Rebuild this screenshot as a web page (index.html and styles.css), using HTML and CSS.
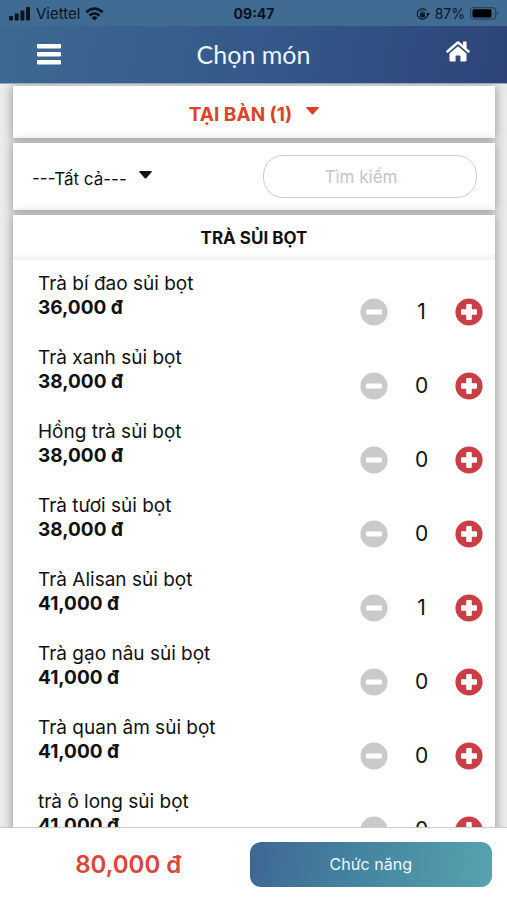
FILE: index.html
```html
<!DOCTYPE html>
<html lang="vi">
<head>
<meta charset="utf-8">
<meta name="viewport" content="width=device-width, initial-scale=1">
<title>Chọn món</title>
<link rel="stylesheet" href="styles.css">
</head>
<body>
<svg class="defs" aria-hidden="true">
  <symbol id="minus" viewBox="0 0 28 28"><circle cx="14" cy="14" r="13.6" fill="#cacaca"/><rect x="6" y="11.5" width="16" height="5" rx="1" fill="#fff"/></symbol>
  <symbol id="plus" viewBox="0 0 28 28"><circle cx="14" cy="14" r="13.6" fill="#c93f45"/><path d="M11.2 7q0-1 1-1h3.600q1 0 1 1v4.200h4.200q1 0 1 1v3.600q0 1-1 1h-4.200v4.200q0 1-1 1h-3.600q-1 0-1-1v-4.200h-4.200q-1 0-1-1v-3.600q0-1 1-1h4.200z" fill="#fff"/></symbol>
  <symbol id="caret" viewBox="0 0 13 8"><path d="M.8 0h11.400q1 .3.300 1.200L7.200 7.200q-.7.700-1.400 0L.5 1.200Q-.2.300.8 0z" fill="currentColor"/></symbol>
</svg>
<div class="status">
  <div class="status-side carrier">
    <svg width="22" height="14" viewBox="0 0 22 14"><rect x="0" y="9" width="4" height="4.500" rx="1"/><rect x="5.700" y="6.500" width="4" height="7" rx="1"/><rect x="11.400" y="3.500" width="4" height="10" rx="1"/><rect x="17" y="0" width="4" height="13.500" rx="1"/></svg>
    <span>Viettel</span>
    <svg width="19" height="14" viewBox="0 0 19 14"><g fill="none" stroke="#0b141c" stroke-width="2.600"><path d="M1.300 5.300Q9.500-2 17.700 5.300"/><path d="M4.400 8.600q5.100-4.300 10.200 0"/></g><path d="M6.500 10.500q3-2.300 6 0l-3 3.200z"/></svg>
  </div>
  <strong>09:47</strong>
  <div class="status-side status-right">
    <svg width="14" height="14" viewBox="0 0 14 14"><circle cx="6.500" cy="7" r="5.200" fill="none" stroke="#0b141c" stroke-width="1.200" stroke-dasharray="28 3"/><rect x="4" y="6.300" width="5" height="4" rx=".6"/><path d="M5 6.500V5.300q1.500-2.200 3 0v1.200" fill="none" stroke="#0b141c"/><path d="M10 6h4l-2 3z"/></svg>
    <span>87%</span>
    <svg width="29" height="13" viewBox="0 0 29 13"><rect x=".6" y=".6" width="25" height="11.600" rx="3" fill="none" stroke="#28475f" stroke-width="1.200"/><rect x="2.500" y="2.300" width="19" height="8.200" rx="1.500" fill="#000"/><path d="M27 4.200q2.600 2.200 0 4.400z" fill="#28475f"/></svg>
  </div>
</div>
<header class="nav">
  <button class="icon-button" aria-label="Menu"><svg width="24" height="21" viewBox="0 0 24 21" fill="#fff"><rect y="0" width="24" height="4.600" rx="1"/><rect y="8" width="24" height="4.600" rx="1"/><rect y="16" width="24" height="4.600" rx="1"/></svg></button>
  <h1>Chọn món</h1>
  <a class="icon-button home" href="#" aria-label="Trang chủ"><svg width="24" height="21" viewBox="0 0 24 21" fill="#fff"><path d="M12 .3q.7 0 1.300.5L17 4V1.200q0-.6.600-.6h2.400q.6 0 .6.600v6l3 2.600q.5.500.1.900l-.8 1q-.4.400-.9 0L12.600 3.600q-.6-.5-1.200 0L2 11.700q-.5.400-.9 0l-.8-1q-.4-.4.100-.9L10.700.8q.6-.5 1.300-.5z"/><path d="M12 5.300l8.500 7.200v7q0 1.100-1.100 1.100h-5v-5.300q0-.8-.8-.8h-3.200q-.8 0-.8.800v5.300h-5q-1.100 0-1.100-1.100v-7z"/></svg></a>
</header>
<main>
  <section class="card place">
    <button class="place-button">TẠI BÀN (1)<svg class="caret" aria-hidden="true"><use href="#caret"/></svg></button>
  </section>
  <section class="card filter">
    <label class="picker"><select aria-label="Nhóm món"><option>---Tất cả---</option></select><svg class="caret" aria-hidden="true"><use href="#caret"/></svg></label>
    <input class="search" type="text" placeholder="Tìm kiếm" aria-label="Tìm kiếm">
  </section>
  <section class="card menu">
    <h2>TRÀ SỦI BỌT</h2>
    <ul>
      <li><div><p>Trà bí đao sủi bọt</p><b>36,000 đ</b></div><div class="stepper"><button aria-label="Bớt"><svg><use href="#minus"/></svg></button><span>1</span><button aria-label="Thêm"><svg><use href="#plus"/></svg></button></div></li>
      <li><div><p>Trà xanh sủi bọt</p><b>38,000 đ</b></div><div class="stepper"><button aria-label="Bớt"><svg><use href="#minus"/></svg></button><span>0</span><button aria-label="Thêm"><svg><use href="#plus"/></svg></button></div></li>
      <li><div><p>Hồng trà sủi bọt</p><b>38,000 đ</b></div><div class="stepper"><button aria-label="Bớt"><svg><use href="#minus"/></svg></button><span>0</span><button aria-label="Thêm"><svg><use href="#plus"/></svg></button></div></li>
      <li><div><p>Trà tươi sủi bọt</p><b>38,000 đ</b></div><div class="stepper"><button aria-label="Bớt"><svg><use href="#minus"/></svg></button><span>0</span><button aria-label="Thêm"><svg><use href="#plus"/></svg></button></div></li>
      <li><div><p>Trà Alisan sủi bọt</p><b>41,000 đ</b></div><div class="stepper"><button aria-label="Bớt"><svg><use href="#minus"/></svg></button><span>1</span><button aria-label="Thêm"><svg><use href="#plus"/></svg></button></div></li>
      <li><div><p>Trà gạo nâu sủi bọt</p><b>41,000 đ</b></div><div class="stepper"><button aria-label="Bớt"><svg><use href="#minus"/></svg></button><span>0</span><button aria-label="Thêm"><svg><use href="#plus"/></svg></button></div></li>
      <li><div><p>Trà quan âm sủi bọt</p><b>41,000 đ</b></div><div class="stepper"><button aria-label="Bớt"><svg><use href="#minus"/></svg></button><span>0</span><button aria-label="Thêm"><svg><use href="#plus"/></svg></button></div></li>
      <li><div><p>trà ô long sủi bọt</p><b>41,000 đ</b></div><div class="stepper"><button aria-label="Bớt"><svg><use href="#minus"/></svg></button><span>0</span><button aria-label="Thêm"><svg><use href="#plus"/></svg></button></div></li>
    </ul>
  </section>
</main>
<footer>
  <strong class="total">80,000 đ</strong>
  <button class="action">Chức năng</button>
</footer>
</body>
</html>
```
FILE: styles.css
```css
* { box-sizing: border-box; }
body {
  margin: 0;
  height: 100vh;
  display: flex;
  flex-direction: column;
  overflow: hidden;
  font-family: Inter, "Noto Sans", sans-serif;
  color: #111;
  background: #fff;
}
button, input, select { font: inherit; color: inherit; }
button { border: 0; padding: 0; background: none; }
svg { display: block; }
h1, h2, p, ul { margin: 0; padding: 0; }
.defs { display: none; }

.status {
  display: flex;
  align-items: center;
  flex: none;
  height: 26px;
  padding: 1px 8px 0 9px;
  background: #406b93;
  color: #0b141c;
  fill: #0b141c;
  font-size: 14px;
}
.status-side { flex: 1; display: flex; align-items: center; gap: 5px; }
.carrier { font-size: 15px; }
.status-right { justify-content: flex-end; }

.nav {
  display: flex;
  align-items: center;
  justify-content: space-between;
  flex: none;
  height: 58px;
  padding: 0 37px;
  color: #eef5fb;
  background: linear-gradient(100deg, #3d6991, #34598a 50%, #2e4479);
  border-bottom: 1px solid #8fa6c0;
}
.nav h1 { padding-bottom: 2px; font: 400 25px/32px Lato, Inter, sans-serif; }
.home { padding-bottom: 6px; }

main {
  flex: 1;
  min-height: 0;
  overflow: hidden;
  padding: 2px 12px 0 13px;
  display: flex;
  flex-direction: column;
  gap: 5px;
  background: #ececec;
}
.card { flex: none; background: #fff; box-shadow: 0 1px 10px 1px #999; }
.caret { width: 13px; height: 8px; }

.place { height: 52px; display: flex; justify-content: center; }
.place-button {
  display: flex;
  align-items: center;
  gap: 14px;
  padding-top: 4px;
  font-size: 19px;
  font-weight: 700;
  color: #df4126;
}
.place-button .caret { margin-bottom: 6px; }

.filter {
  height: 67px;
  padding: 0 18px 0 19px;
  display: flex;
  align-items: center;
  justify-content: space-between;
}
.picker { display: flex; align-items: center; gap: 12px; font-size: 17px; }
.picker select { appearance: none; border: 0; padding: 4px 0 0; background: none; }
.picker .caret { margin-bottom: 4px; }
.search {
  width: 214px;
  height: 43px;
  padding: 0 18px 0 0;
  border: 1px solid #ccc;
  border-radius: 20px;
  background: #fff;
  text-align: center;
  font-size: 17px;
}
.search::placeholder { color: #c4c4c4; }

.menu h2 {
  height: 45px;
  font-size: 17px;
  font-weight: 700;
  line-height: 46px;
  text-align: center;
  background: linear-gradient(#fff 37px, #f0f0f0);
}
.menu ul { list-style: none; }
.menu li {
  display: flex;
  justify-content: space-between;
  height: 74px;
  padding: 12px 12px 0 25px;
  font-size: 19px;
  line-height: 24px;
}
.menu b { display: block; font-weight: 700; }
.stepper {
  display: grid;
  grid-template-columns: 28px 67px 28px;
  align-self: flex-start;
  align-items: center;
  padding-top: 26px;
  font-size: 21px;
  line-height: 28px;
  text-align: center;
}
.stepper svg { width: 28px; height: 28px; }

footer {
  flex: none;
  display: grid;
  grid-template-columns: 1fr 1fr;
  align-items: center;
  height: 73px;
  padding: 0 15px 0 7px;
  border-top: 1px solid #ccc;
}
.total { text-align: center; font-size: 24px; font-weight: 600; color: #db453c; }
.action {
  height: 45px;
  border-radius: 11px;
  font-size: 16px;
  color: #eff8fb;
  background: linear-gradient(100deg, #3e6794, #4687a1 50%, #56a3ae);
}
```
